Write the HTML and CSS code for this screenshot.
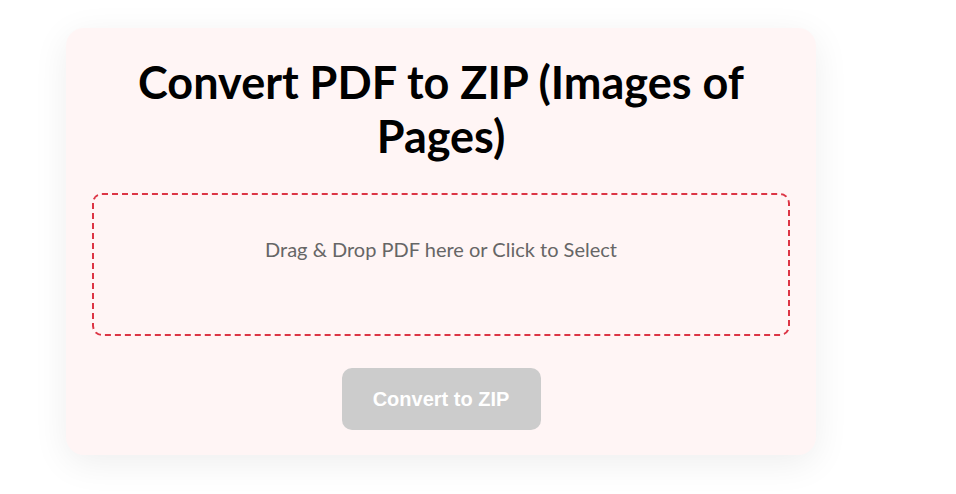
FILE: index.html
```html
<!DOCTYPE html>
<html lang="en">
<head>
<meta charset="utf-8">
<title>Convert PDF to ZIP</title>
<link rel="stylesheet" href="styles.css">
</head>
<body>
<main class="card">
  <h1 class="title">Convert PDF to ZIP (Images of Pages)</h1>
  <div class="dropzone">
    <p class="drop-text">Drag &amp; Drop PDF here or Click to Select</p>
  </div>
  <div class="actions">
    <button class="convert-btn" disabled>Convert to ZIP</button>
  </div>
</main>
</body>
</html>
```
FILE: styles.css
```css
html, body {
  margin: 0;
  padding: 0;
  background: #ffffff;
}
body {
  padding: 28px 0 40px 66px;
  font-family: "Lato", "Noto Sans", sans-serif;
}
.card {
  width: 750px;
  box-sizing: border-box;
  padding: 27px 26px 25px;
  background: #fff5f5;
  border-radius: 18px;
  box-shadow: 0 8px 36px rgba(0, 0, 0, 0.07);
}
.title {
  margin: 0 0 30px;
  text-align: center;
  font-size: 45px;
  line-height: 54px;
  font-weight: 700;
  color: #000;
  padding: 0 40px;
}
.dropzone {
  height: 143px;
  box-sizing: border-box;
  border: 2px dashed #dc3545;
  border-radius: 10px;
  padding-top: 40px;
  text-align: center;
}
.drop-text {
  margin: 0;
  font-size: 20px;
  line-height: 28px;
  color: #666;
}
.actions {
  display: flex;
  justify-content: center;
  margin-top: 32px;
}
.convert-btn {
  width: 199px;
  height: 62px;
  border: none;
  border-radius: 10px;
  background: #cccccc;
  color: #fff;
  font-family: "Liberation Sans", Arial, sans-serif;
  font-weight: 700;
  font-size: 20px;
}
```
